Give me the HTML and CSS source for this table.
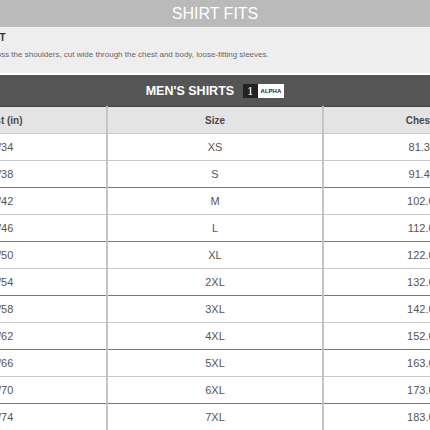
FILE: index.html
```html
<!DOCTYPE html>
<html lang="en">
<head>
    <meta charset="UTF-8">
    <title>Shirt Fits</title>
    <link rel="stylesheet" href="styles.css">
</head>
<body>
    <div class="sheet">
        <div class="title-bar">SHIRT FITS</div>
        <div class="fit-info">
            <div class="fit-name">RELAXED FIT</div>
            <div class="fit-desc">Relaxed across the shoulders, cut wide through the chest and body, loose-fitting sleeves.</div>
        </div>
        <div class="chart-bar">
            <span class="chart-title">MEN'S SHIRTS</span>
            <span class="badge"><span class="badge-num">1</span><span class="badge-tag">ALPHA</span></span>
        </div>
        <table class="size-table">
            <thead>
                <tr><th>Chest (in)</th><th>Size</th><th>Chest (cm)</th></tr>
            </thead>
            <tbody>
                <tr><td>32/34</td><td>XS</td><td>81.3/86.4</td></tr>
                <tr><td>36/38</td><td>S</td><td>91.4/96.5</td></tr>
                <tr><td>40/42</td><td>M</td><td>102.0/107</td></tr>
                <tr><td>44/46</td><td>L</td><td>112.0/117</td></tr>
                <tr><td>48/50</td><td>XL</td><td>122.0/127</td></tr>
                <tr><td>52/54</td><td>2XL</td><td>132.0/137</td></tr>
                <tr><td>56/58</td><td>3XL</td><td>142.0/147</td></tr>
                <tr><td>60/62</td><td>4XL</td><td>152.0/157</td></tr>
                <tr><td>64/66</td><td>5XL</td><td>163.0/168</td></tr>
                <tr><td>68/70</td><td>6XL</td><td>173.0/178</td></tr>
                <tr><td>72/74</td><td>7XL</td><td>183.0/188</td></tr>
            </tbody>
        </table>
    </div>
</body>
</html>
```

FILE: styles.css
```css
body {
    margin: 0;
    padding: 0;
    overflow: hidden;
    background: #ffffff;
    font-family: 'Liberation Sans', Arial, sans-serif;
}

.sheet {
    width: 648px;
    margin-left: -109px;
}

.title-bar {
    height: 27px;
    line-height: 28px;
    background: #bababa;
    color: #ffffff;
    font-size: 16px;
    text-align: center;
}

.fit-info {
    height: 46px;
    background: #eeeeee;
    border-bottom: 2px solid #ffffff;
}
.fit-name {
    padding-top: 5px;
    padding-left: 49px;
    font-size: 10px;
    font-weight: bold;
    color: #333333;
}
.fit-desc {
    margin-top: 7px;
    padding-left: 63px;
    font-size: 8px;
    color: #666666;
}

.chart-bar {
    height: 31px;
    background: #555555;
    display: flex;
    justify-content: center;
    align-items: center;
    gap: 9px;
}
.chart-title {
    color: #ffffff;
    font-size: 12.5px;
    font-weight: bold;
}
.badge {
    display: flex;
    height: 14px;
}
.badge-num {
    background: #222222;
    color: #ffffff;
    font-family: 'Liberation Serif', serif;
    font-size: 13px;
    line-height: 14px;
    padding: 0 4px;
}
.badge-tag {
    background: #ffffff;
    color: #222222;
    font-size: 6px;
    font-weight: bold;
    line-height: 14px;
    padding: 0 3px;
}

.size-table {
    width: 648px;
    border-collapse: collapse;
    table-layout: fixed;
    border-top: 1px solid #444444;
}
.size-table th,
.size-table td {
    height: 26px;
    padding: 0;
    text-align: center;
    border-left: 2px solid #c4c4c4;
}
.size-table th:first-child,
.size-table td:first-child {
    border-left: none;
    padding-left: 2px;
}
.size-table th {
    background: #e4e4e4;
    color: #4a4a4a;
    font-size: 10px;
    font-weight: bold;
    border-bottom: 1px solid #cccccc;
}
.size-table td {
    color: #555555;
    font-size: 11px;
    border-bottom: 1px solid #c8c8c8;
}
.size-table tbody tr:nth-child(even) td {
    border-bottom: 1px solid #777777;
}
```
